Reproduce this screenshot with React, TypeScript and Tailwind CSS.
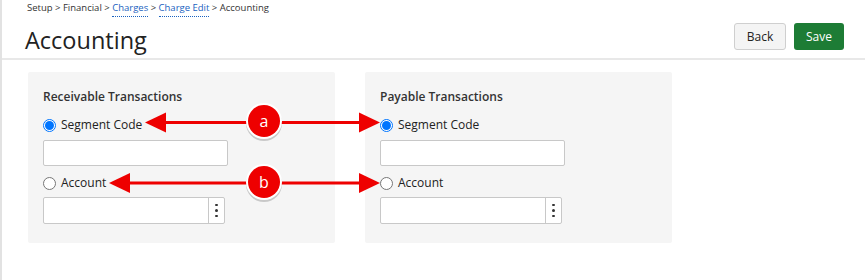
import React from "react";

function Radio({ checked }: { checked?: boolean }) {
  return checked ? (
    <span className="w-[13px] h-[13px] rounded-full border border-[#0075ff] flex items-center justify-center bg-white shrink-0">
      <span className="w-[9px] h-[9px] rounded-full bg-[#0075ff]" />
    </span>
  ) : (
    <span className="w-[13px] h-[13px] rounded-full border border-[#767676] bg-white shrink-0" />
  );
}

function Panel({ title }: { title: string }) {
  return (
    <div className="w-[307px] h-[171px] bg-[#f5f5f5] rounded-[2px] pt-[17px] px-[15px]">
      <div className="text-[12px] leading-[16px] font-semibold text-[#333]">{title}</div>
      <div className="mt-[12px] flex items-center gap-[5px] h-[16px]">
        <Radio checked />
        <span className="text-[12px] text-[#222]">Segment Code</span>
      </div>
      <div className="mt-[7px] w-[185px] h-[26px] bg-white border border-[#c8c8c8] rounded-[2px]" />
      <div className="mt-[9px] flex items-center gap-[5px] h-[16px]">
        <Radio />
        <span className="text-[12px] text-[#222]">Account</span>
      </div>
      <div className="mt-[6px] w-[182px] h-[27px] bg-white border border-[#c8c8c8] rounded-[2px] flex">
        <div className="flex-1" />
        <div className="w-[16px] border-l border-[#c8c8c8] flex flex-col items-center justify-center gap-[3px]">
          <span className="w-[2.5px] h-[2.5px] rounded-full bg-[#333]" />
          <span className="w-[2.5px] h-[2.5px] rounded-full bg-[#333]" />
          <span className="w-[2.5px] h-[2.5px] rounded-full bg-[#333]" />
        </div>
      </div>
    </div>
  );
}

function Badge({ cx, cy, label }: { cx: number; cy: number; label: string }) {
  return (
    <g>
      <circle cx={cx} cy={cy + 2} r={18} fill="rgba(0,0,0,0.18)" />
      <circle cx={cx} cy={cy} r={18} fill="#ffffff" />
      <circle cx={cx} cy={cy} r={16} fill="#ee0000" />
      <text
        x={cx}
        y={cy + 5.5}
        textAnchor="middle"
        fontSize="16"
        fill="#ffffff"
        fontFamily="'Open Sans', sans-serif"
      >
        {label}
      </text>
    </g>
  );
}

export default function App() {
  return (
    <div
      className="relative w-full h-[280px] bg-white border-l-2 border-[#e2e2e2] overflow-hidden"
      style={{ fontFamily: "'Open Sans', 'Liberation Sans', sans-serif" }}
    >
      <div className="h-[60px] border-b-2 border-[#e8e8e8] flex justify-between pl-[25px] pr-[21px]">
        <div>
          <div className="text-[9.5px] leading-[14px] pt-[1px] text-[#333]">
            Setup &gt; Financial &gt;{" "}
            <span className="text-[#1a62c0] pb-[2px] border-b border-dotted border-[#1a62c0]">Charges</span> &gt;{" "}
            <span className="text-[#1a62c0] pb-[2px] border-b border-dotted border-[#1a62c0]">Charge Edit</span> &gt; Accounting
          </div>
          <div className="text-[23.5px] leading-[30px] mt-[10px] ml-[-2px] text-[#222]">Accounting</div>
        </div>
        <div className="flex gap-[8px] pt-[23px]">
          <button className="w-[52px] h-[27px] bg-[#f4f4f4] border border-[#cfcfcf] rounded-[3px] text-[12px] text-[#222]">
            Back
          </button>
          <button className="w-[50px] h-[27px] bg-[#1d7c35] rounded-[3px] text-[12px] text-white">
            Save
          </button>
        </div>
      </div>
      <div className="flex gap-[30px] pl-[26px] pt-[12px]">
        <Panel title="Receivable Transactions" />
        <Panel title="Payable Transactions" />
      </div>
      <svg className="absolute left-0 top-0 pointer-events-none" width="865" height="280">
        <line x1="160" y1="122.5" x2="360" y2="122.5" stroke="#ee0000" strokeWidth="3" />
        <polygon points="143,122.5 164,112.5 164,132.5" fill="#ee0000" />
        <polygon points="378,122.5 357,112.5 357,132.5" fill="#ee0000" />
        <line x1="124" y1="183" x2="360" y2="183" stroke="#ee0000" strokeWidth="3" />
        <polygon points="107,183 128,173 128,193" fill="#ee0000" />
        <polygon points="378,183 357,173 357,193" fill="#ee0000" />
        <Badge cx={262} cy={121} label="a" />
        <Badge cx={262} cy={182} label="b" />
      </svg>
    </div>
  );
}
